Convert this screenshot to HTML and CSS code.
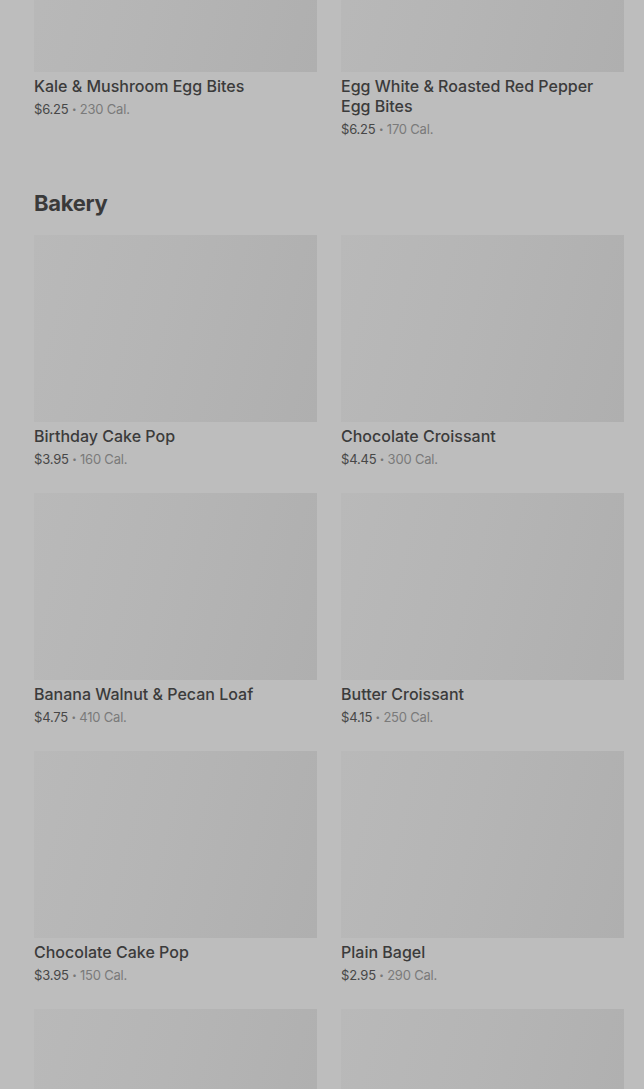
FILE: index.html
```html
<!DOCTYPE html>
<html lang="en">
<head>
<meta charset="utf-8">
<title>Menu</title>
<link rel="stylesheet" href="styles.css">
</head>
<body>
<main class="menu">
  <section class="section section--scrolled">
    <div class="grid">
      <article class="card">
        <div class="thumb"></div>
        <h3 class="card-title">Kale &amp; Mushroom Egg Bites</h3>
        <p class="card-meta"><span class="price">$6.25</span> <span class="dot">•</span> <span class="cal">230 Cal.</span></p>
      </article>
      <article class="card">
        <div class="thumb"></div>
        <h3 class="card-title">Egg White &amp; Roasted Red Pepper Egg Bites</h3>
        <p class="card-meta"><span class="price">$6.25</span> <span class="dot">•</span> <span class="cal">170 Cal.</span></p>
      </article>
    </div>
  </section>
  <section class="section">
    <h2 class="section-title">Bakery</h2>
    <div class="grid">
      <article class="card">
        <div class="thumb"></div>
        <h3 class="card-title">Birthday Cake Pop</h3>
        <p class="card-meta"><span class="price">$3.95</span> <span class="dot">•</span> <span class="cal">160 Cal.</span></p>
      </article>
      <article class="card">
        <div class="thumb"></div>
        <h3 class="card-title">Chocolate Croissant</h3>
        <p class="card-meta"><span class="price">$4.45</span> <span class="dot">•</span> <span class="cal">300 Cal.</span></p>
      </article>
      <article class="card">
        <div class="thumb"></div>
        <h3 class="card-title">Banana Walnut &amp; Pecan Loaf</h3>
        <p class="card-meta"><span class="price">$4.75</span> <span class="dot">•</span> <span class="cal">410 Cal.</span></p>
      </article>
      <article class="card">
        <div class="thumb"></div>
        <h3 class="card-title">Butter Croissant</h3>
        <p class="card-meta"><span class="price">$4.15</span> <span class="dot">•</span> <span class="cal">250 Cal.</span></p>
      </article>
      <article class="card">
        <div class="thumb"></div>
        <h3 class="card-title">Chocolate Cake Pop</h3>
        <p class="card-meta"><span class="price">$3.95</span> <span class="dot">•</span> <span class="cal">150 Cal.</span></p>
      </article>
      <article class="card">
        <div class="thumb"></div>
        <h3 class="card-title">Plain Bagel</h3>
        <p class="card-meta"><span class="price">$2.95</span> <span class="dot">•</span> <span class="cal">290 Cal.</span></p>
      </article>
      <article class="card">
        <div class="thumb"></div>
        <h3 class="card-title">&nbsp;</h3>
        <p class="card-meta">&nbsp;</p>
      </article>
      <article class="card">
        <div class="thumb"></div>
        <h3 class="card-title">&nbsp;</h3>
        <p class="card-meta">&nbsp;</p>
      </article>
    </div>
  </section>
</main>
</body>
</html>
```
FILE: styles.css
```css
html, body {
  margin: 0;
  padding: 0;
  background: #bdbdbd;
}
body {
  font-family: Inter, "Noto Sans", "Liberation Sans", sans-serif;
  color: #3b3b3b;
  overflow: hidden;
  height: 1089px;
}
.menu {
  padding: 0 20px 0 34px;
  margin-top: -115px;
}
.section {
  padding-bottom: 50px;
}
.section-title {
  margin: 0 0 18px;
  font-size: 22px;
  line-height: 28px;
  font-weight: 700;
  color: #3a3a3a;
  letter-spacing: -0.3px;
}
.grid {
  display: grid;
  grid-template-columns: 1fr 1fr;
  column-gap: 24px;
  row-gap: 24px;
}
.card {
  display: flex;
  flex-direction: column;
}
.thumb {
  height: 187px;
  background: linear-gradient(105deg, #b9b9b9 0%, #b5b5b5 45%, #afafaf 100%);
}
.card-title {
  margin: 4px 0 0;
  font-size: 16px;
  line-height: 20px;
  font-weight: 500;
  color: #3b3b3b;
}
.card-meta {
  margin: 3px 0 0;
  height: 20px;
  font-size: 13px;
  line-height: 20px;
  letter-spacing: -0.2px;
}
.price {
  color: #474747;
}
.dot {
  color: #777;
  font-size: 8px;
  line-height: 0;
  vertical-align: 2px;
}
.cal {
  color: #7a7a7a;
}
```
